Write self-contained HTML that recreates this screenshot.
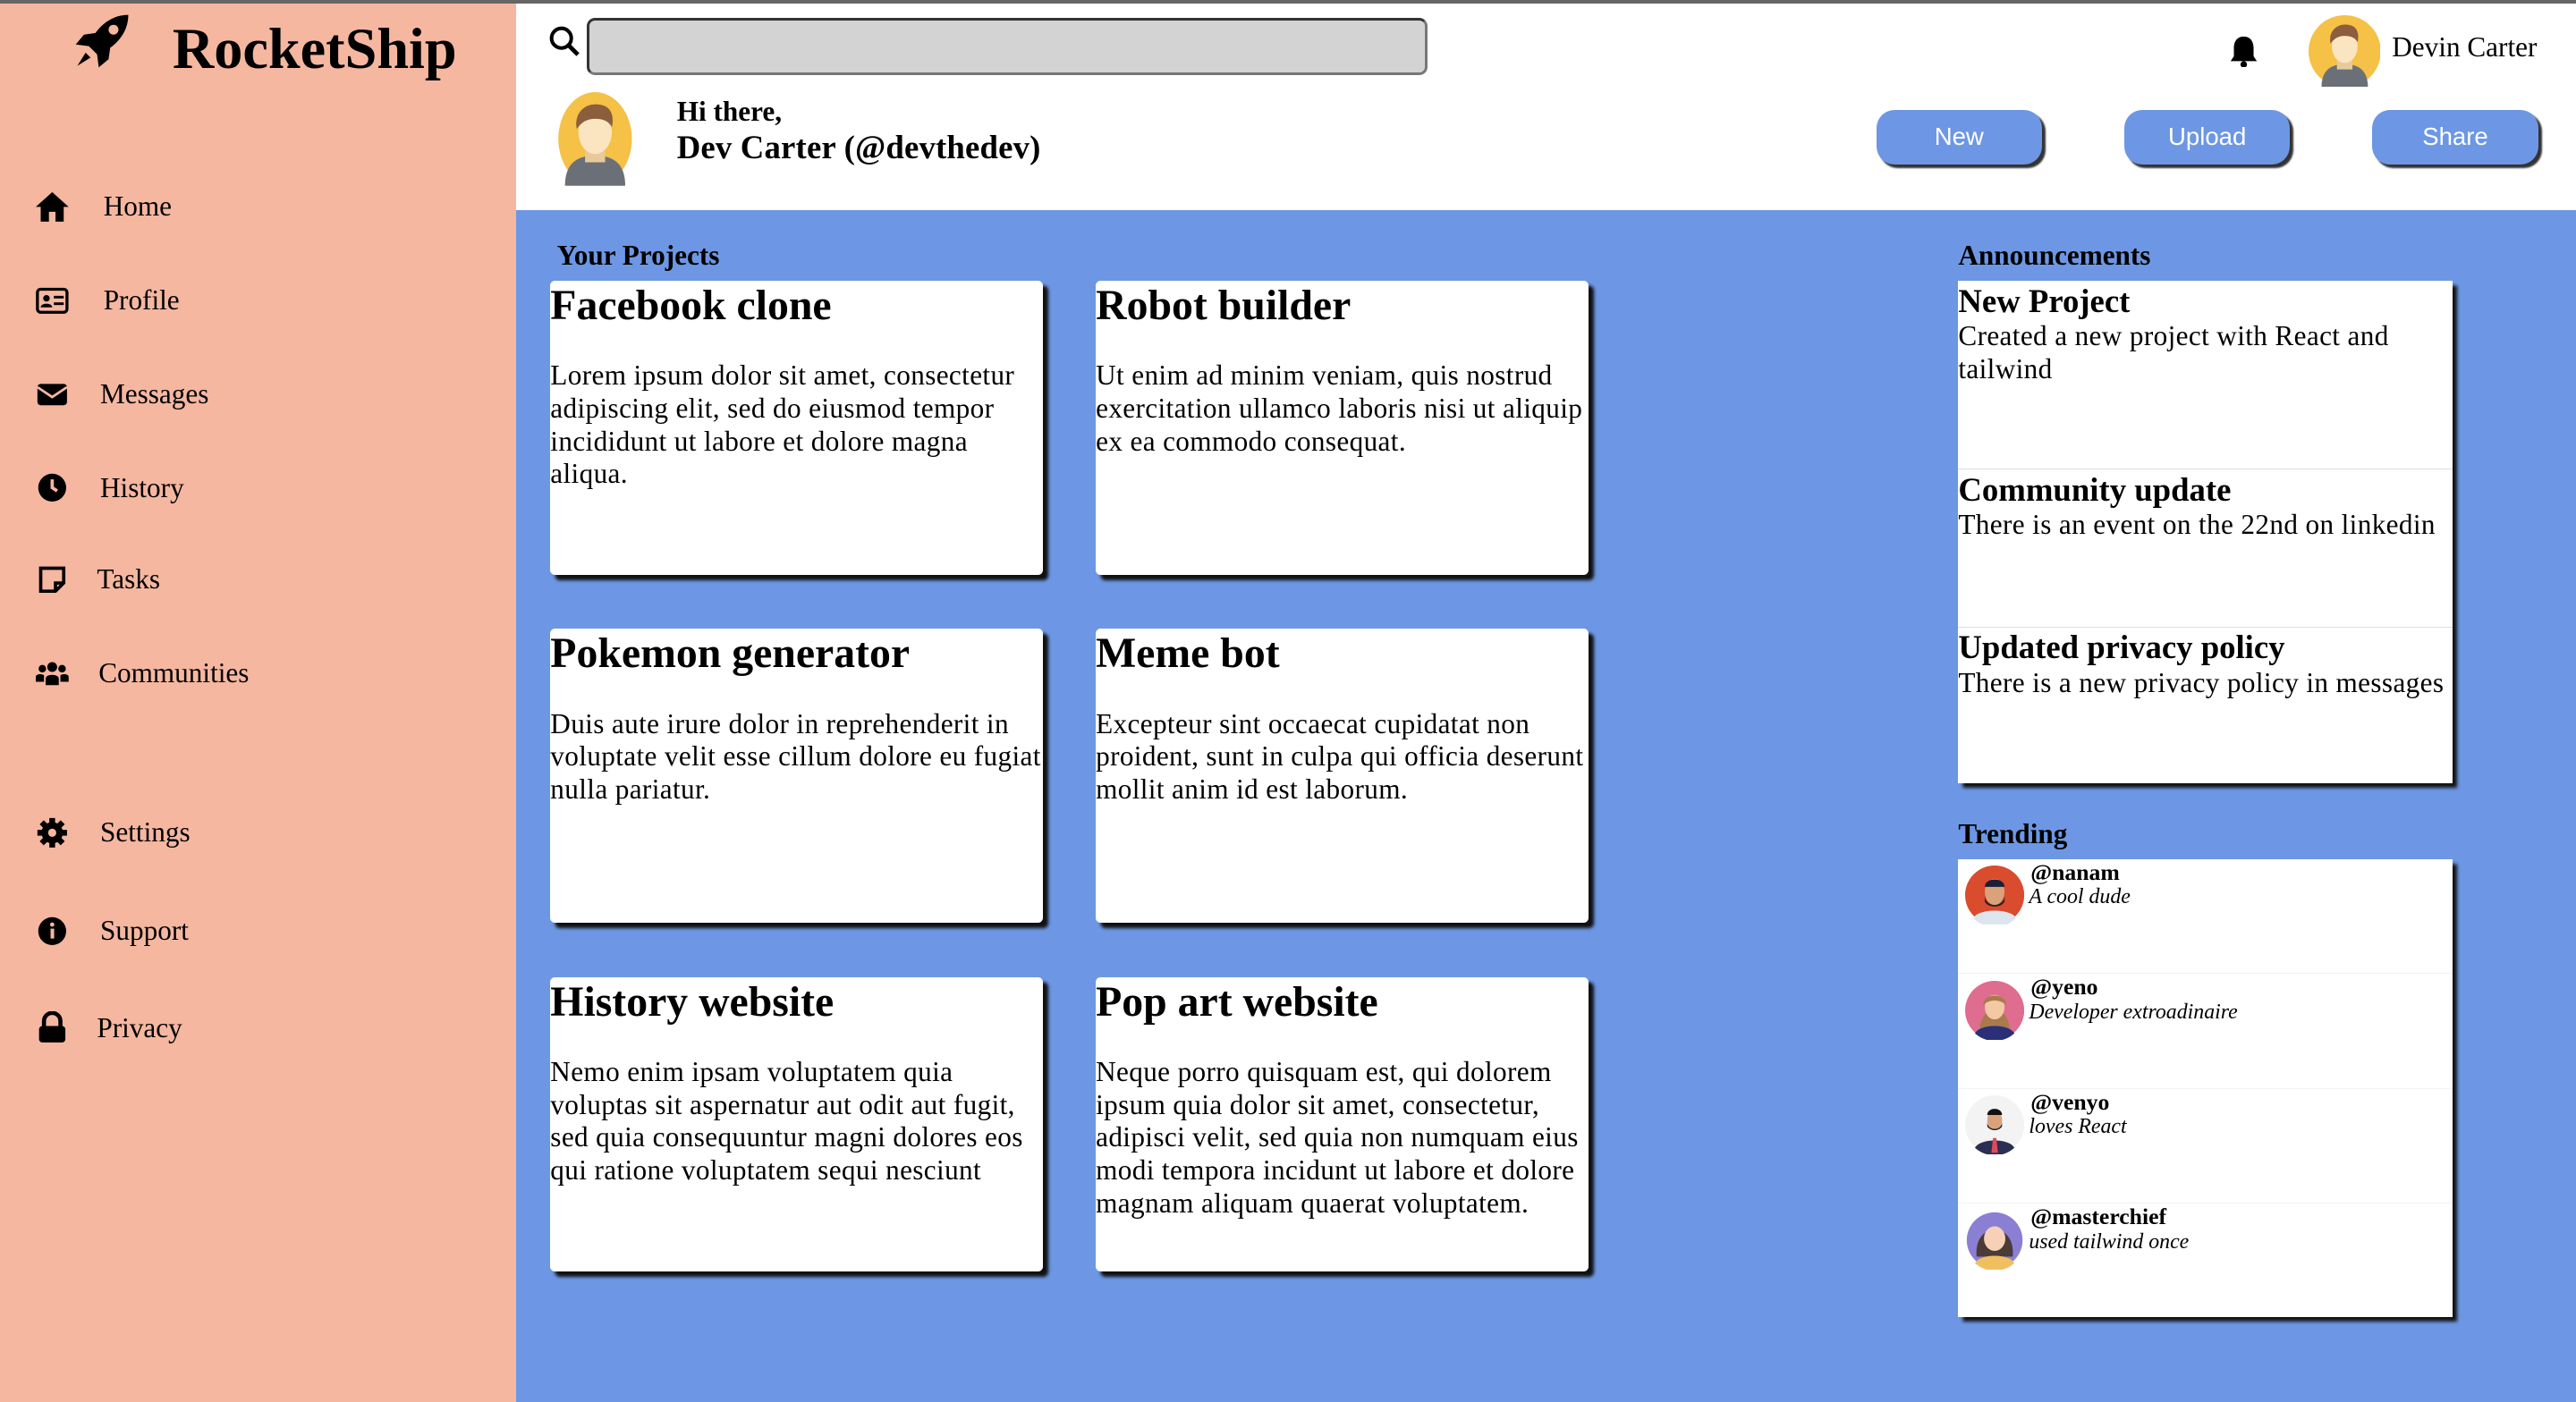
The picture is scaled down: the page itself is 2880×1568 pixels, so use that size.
<!DOCTYPE html>
<html><head><meta charset="utf-8"><style>
*{margin:0;padding:0;box-sizing:border-box}
html,body{width:2880px;height:1568px;overflow:hidden}
body{font-family:"Liberation Serif",serif;background:#6d97e4}
#z{zoom:1.83673;width:1568px;height:854px;position:relative}
.a{position:absolute}
#side{left:0;top:0;width:314px;height:854px;background:#f5b7a0}
#head{left:314px;top:0;width:1254px;height:128px;background:#fff}
.nav{position:absolute;left:22px;font-size:17px;display:flex;align-items:center}
.nav svg{width:20px;height:20px;margin-right:18px}
.btn{position:absolute;top:67px;width:101px;height:33px;background:#6d97e4;color:#fff;font:15px "Liberation Sans",sans-serif;border-radius:11px;display:flex;align-items:center;justify-content:center;box-shadow:2px 2px 1px #333}
.card{position:absolute;width:300px;height:179px;background:#fff;box-shadow:3px 3px 2px #111;border-radius:3px}
.card h2{font-size:26px;line-height:30px;font-weight:bold}
.card p{font-size:17px;line-height:20px;margin-top:18px;letter-spacing:0.2px}
h3{position:absolute;font-size:17px;font-weight:bold}
.box{position:absolute;left:1192px;width:301px;background:#fff;box-shadow:3px 3px 2px #111}
.an{height:115px;border-bottom:1px solid #ddd;font-size:17px;line-height:20px;letter-spacing:0.2px}
.an b{font-size:20px;display:block;line-height:23px;padding-top:1px;letter-spacing:0}
.tr{height:70px;position:relative;border-bottom:1px solid #f2f2f2}
.tr svg{position:absolute;left:4px;top:4px;width:36px;height:36px}
.tr b{position:absolute;left:44px;top:0;font-size:14px}
.tr i{position:absolute;left:43px;top:16px;font-size:13px}
</style></head><body><div id="z">
<div class="a" style="left:0;top:0;width:1568px;height:2px;background:#666;z-index:5"></div>
<div class="a" id="side">
<svg class="a" style="left:44px;top:7px" width="36" height="36" viewBox="0 0 36 36"><path d="M34 2C26 2 19 6 14 13L7 14 2 20 10 21 15 26 16 34 22 29 23 22C30 17 34 10 34 2Z" fill="#000"/><circle cx="25" cy="11" r="3" fill="#f5b7a0"/><path d="M8 25 3 33 11 28Z" fill="#000"/></svg>
<div class="a" style="left:105px;top:10px;font-size:35px;font-weight:bold">RocketShip</div>
<div class="nav" style="top:116px"><svg viewBox="0 0 20 20"><path d="M10 1 0 10h3v9h5v-6h4v6h5v-9h3z"/></svg><span style="margin-left:3px">Home</span></div>
<div class="nav" style="top:173px"><svg viewBox="0 0 20 20"><rect x="1" y="3" width="18" height="14" rx="2" fill="none" stroke="#000" stroke-width="1.8"/><circle cx="6.5" cy="8.5" r="2"/><path d="M3 14c0-3 7-3 7 0z"/><rect x="11" y="7" width="6" height="1.6"/><rect x="11" y="11" width="6" height="1.6"/></svg><span style="margin-left:3px">Profile</span></div>
<div class="nav" style="top:230px"><svg viewBox="0 0 20 20"><rect x="1" y="4" width="18" height="13" rx="2"/><path d="M1 6l9 6 9-6" fill="none" stroke="#f5b7a0" stroke-width="1.5"/></svg><span style="margin-left:1px">Messages</span></div>
<div class="nav" style="top:287px"><svg viewBox="0 0 20 20"><circle cx="10" cy="10" r="8.5"/><path d="M10 5v5l3 2" stroke="#f5b7a0" stroke-width="2" fill="none"/></svg><span style="margin-left:1px">History</span></div>
<div class="nav" style="top:343px"><svg viewBox="0 0 20 20"><path d="M3 3h14v9l-5 5H3z" fill="none" stroke="#000" stroke-width="2"/><path d="M12 17v-5h5" fill="none" stroke="#000" stroke-width="2"/></svg><span style="margin-left:-1px">Tasks</span></div>
<div class="nav" style="top:400px"><svg viewBox="0 0 20 20"><circle cx="10" cy="6" r="3"/><circle cx="4" cy="7" r="2.3"/><circle cx="16" cy="7" r="2.3"/><path d="M6 17v-4c0-3 8-3 8 0v4z"/><path d="M0 15v-3c0-2 4-2 5-1v4zM20 15v-3c0-2-4-2-5-1v4z"/></svg><span>Communities</span></div>
<div class="nav" style="top:497px"><svg viewBox="0 0 20 20"><circle cx="10" cy="10" r="6.5"/><g stroke="#000" stroke-width="3.5"><path d="M10 1v18M1 10h18M3.6 3.6l12.8 12.8M16.4 3.6 3.6 16.4"/></g><circle cx="10" cy="10" r="2.5" fill="#f5b7a0"/></svg><span style="margin-left:1px">Settings</span></div>
<div class="nav" style="top:557px"><svg viewBox="0 0 20 20"><circle cx="10" cy="10" r="8.5"/><rect x="9" y="8.5" width="2.2" height="6" fill="#f5b7a0"/><circle cx="10" cy="6" r="1.3" fill="#f5b7a0"/></svg><span style="margin-left:1px">Support</span></div>
<div class="nav" style="top:616px"><svg viewBox="0 0 20 20"><path d="M5 9V6a5 5 0 0 1 10 0v3" fill="none" stroke="#000" stroke-width="2.5"/><rect x="2" y="9" width="16" height="10" rx="2"/></svg><span style="margin-left:-1px">Privacy</span></div>
</div>
<div class="a" id="head"></div>
<svg class="a" style="left:334px;top:15px" width="20" height="20" viewBox="0 0 20 20"><circle cx="8" cy="8" r="6" fill="none" stroke="#000" stroke-width="2.2"/><path d="M12.5 12.5 18 18" stroke="#000" stroke-width="2.6"/></svg>
<div class="a" style="left:357px;top:11px;width:512px;height:35px;background:#d3d3d3;border:2px solid #333;border-bottom-color:#777;border-right-color:#777;border-radius:5px"></div>
<svg class="a" style="left:334px;top:56px" width="57" height="57" viewBox="0 0 56 56"><ellipse cx="28" cy="28" rx="22" ry="28" fill="#f5c146"/><path d="M10 56c0-14 8-18 18-18s18 4 18 18z" fill="#6b7078"/><rect x="22" y="30" width="12" height="12" fill="#e8c99a"/><ellipse cx="28" cy="24" rx="10" ry="13" fill="#fae5c0"/><path d="M17 22c-2-10 6-17 16-14 6 2 6 9 5 13-2-4-6-5-10-5-5 0-8 2-11 6z" fill="#8b5e3c"/></svg>
<div class="a" style="left:412px;top:58px;font-size:17px;font-weight:bold">Hi there,</div>
<div class="a" style="left:412px;top:78px;font-size:20px;font-weight:bold;letter-spacing:0.1px">Dev Carter (@devthedev)</div>
<svg class="a" style="left:1357px;top:21px" width="18" height="20" viewBox="0 0 18 20"><path d="M9 1c4 0 6 3 6 7v5l2 3H1l2-3V8c0-4 2-7 6-7z"/><circle cx="9" cy="18" r="2"/></svg>
<svg class="a" style="left:1405px;top:9px" width="44" height="44" viewBox="0 0 56 56"><circle cx="28" cy="28" r="28" fill="#f5c146"/><path d="M10 56c0-14 8-18 18-18s18 4 18 18z" fill="#6b7078"/><rect x="22" y="30" width="12" height="12" fill="#e8c99a"/><ellipse cx="28" cy="24" rx="10" ry="13" fill="#fae5c0"/><path d="M17 22c-2-10 6-17 16-14 6 2 6 9 5 13-2-4-6-5-10-5-5 0-8 2-11 6z" fill="#8b5e3c"/></svg>
<div class="a" style="left:1456px;top:19px;font-size:17px">Devin Carter</div>
<div class="btn" style="left:1142px">New</div>
<div class="btn" style="left:1293px">Upload</div>
<div class="btn" style="left:1444px">Share</div>
<h3 style="left:339px;top:146px">Your Projects</h3>
<div class="card" style="left:335px;top:171px"><h2>Facebook clone</h2><p>Lorem ipsum dolor sit amet, consectetur adipiscing elit, sed do eiusmod tempor incididunt ut labore et dolore magna aliqua.</p></div>
<div class="card" style="left:667px;top:171px"><h2>Robot builder</h2><p>Ut enim ad minim veniam, quis nostrud exercitation ullamco laboris nisi ut aliquip ex ea commodo consequat.</p></div>
<div class="card" style="left:335px;top:383px"><h2>Pokemon generator</h2><p>Duis aute irure dolor in reprehenderit in voluptate velit esse cillum dolore eu fugiat nulla pariatur.</p></div>
<div class="card" style="left:667px;top:383px"><h2>Meme bot</h2><p>Excepteur sint occaecat cupidatat non proident, sunt in culpa qui officia deserunt mollit anim id est laborum.</p></div>
<div class="card" style="left:335px;top:595px"><h2>History website</h2><p>Nemo enim ipsam voluptatem quia voluptas sit aspernatur aut odit aut fugit, sed quia consequuntur magni dolores eos qui ratione voluptatem sequi nesciunt</p></div>
<div class="card" style="left:667px;top:595px"><h2>Pop art website</h2><p>Neque porro quisquam est, qui dolorem ipsum quia dolor sit amet, consectetur, adipisci velit, sed quia non numquam eius modi tempora incidunt ut labore et dolore magnam aliquam quaerat voluptatem.</p></div>
<h3 style="left:1192px;top:146px">Announcements</h3>
<div class="box" style="top:171px;height:306px">
<div class="an"><b>New Project</b>Created a new project with React and tailwind</div>
<div class="an" style="height:96px"><b>Community update</b>There is an event on the 22nd on linkedin</div>
<div class="an" style="height:95px;border:none"><b>Updated privacy policy</b>There is a new privacy policy in messages</div>
</div>
<h3 style="left:1192px;top:498px">Trending</h3>
<div class="box" style="top:523px;height:279px">
<div class="tr"><svg viewBox="0 0 36 36"><circle cx="18" cy="18" r="18" fill="#d94c2e"/><path d="M5 32c3-6 23-6 26 0a18 18 0 0 1-26 0z" fill="#dde6ee"/><ellipse cx="18" cy="16" rx="6" ry="8" fill="#d9a27a"/><path d="M12 18c0 8 12 8 12 0v4c-2 4-10 4-12 0z" fill="#222"/><path d="M12 13c0-6 12-6 12 0z" fill="#1c1f3a"/></svg><b>@nanam</b><i>A cool dude</i></div>
<div class="tr"><svg viewBox="0 0 36 36"><circle cx="18" cy="18" r="18" fill="#de6d8f"/><path d="M9 30c0-16 18-16 18 0z" fill="#a97a4c"/><path d="M6 32c3-6 21-6 24 0a18 18 0 0 1-24 0z" fill="#2a2f78"/><ellipse cx="18" cy="16" rx="6" ry="7.5" fill="#f3c9a4"/><path d="M11 15c0-8 14-8 14 0-3-4-11-4-14 0z" fill="#a97a4c"/></svg><b>@yeno</b><i>Developer extroadinaire</i></div>
<div class="tr"><svg viewBox="0 0 36 36"><circle cx="18" cy="18" r="18" fill="#f3f3f3"/><path d="M6 32c3-6 21-6 24 0a18 18 0 0 1-24 0z" fill="#2b2f52"/><path d="M17 26h2l1 9h-4z" fill="#e04a5a"/><ellipse cx="18" cy="15" rx="4.5" ry="6" fill="#d9a27a"/><path d="M13.5 16c0 6 9 6 9 0v3c-2 3-7 3-9 0z" fill="#222"/><path d="M13.5 12c0-5 9-5 9 0z" fill="#111"/></svg><b>@venyo</b><i>loves React</i></div>
<div class="tr" style="border:none"><svg viewBox="0 0 36 36"><circle cx="18" cy="18" r="17" fill="#8b7fd4"/><path d="M7 28c-2-22 24-22 22 0z" fill="#4a3b36"/><path d="M6 32c3-6 21-6 24 0a18 18 0 0 1-24 0z" fill="#f0c060"/><ellipse cx="18" cy="17" rx="6.5" ry="7.5" fill="#f6d1b8"/></svg><b>@masterchief</b><i>used tailwind once</i></div>
</div>
</div></body></html>
